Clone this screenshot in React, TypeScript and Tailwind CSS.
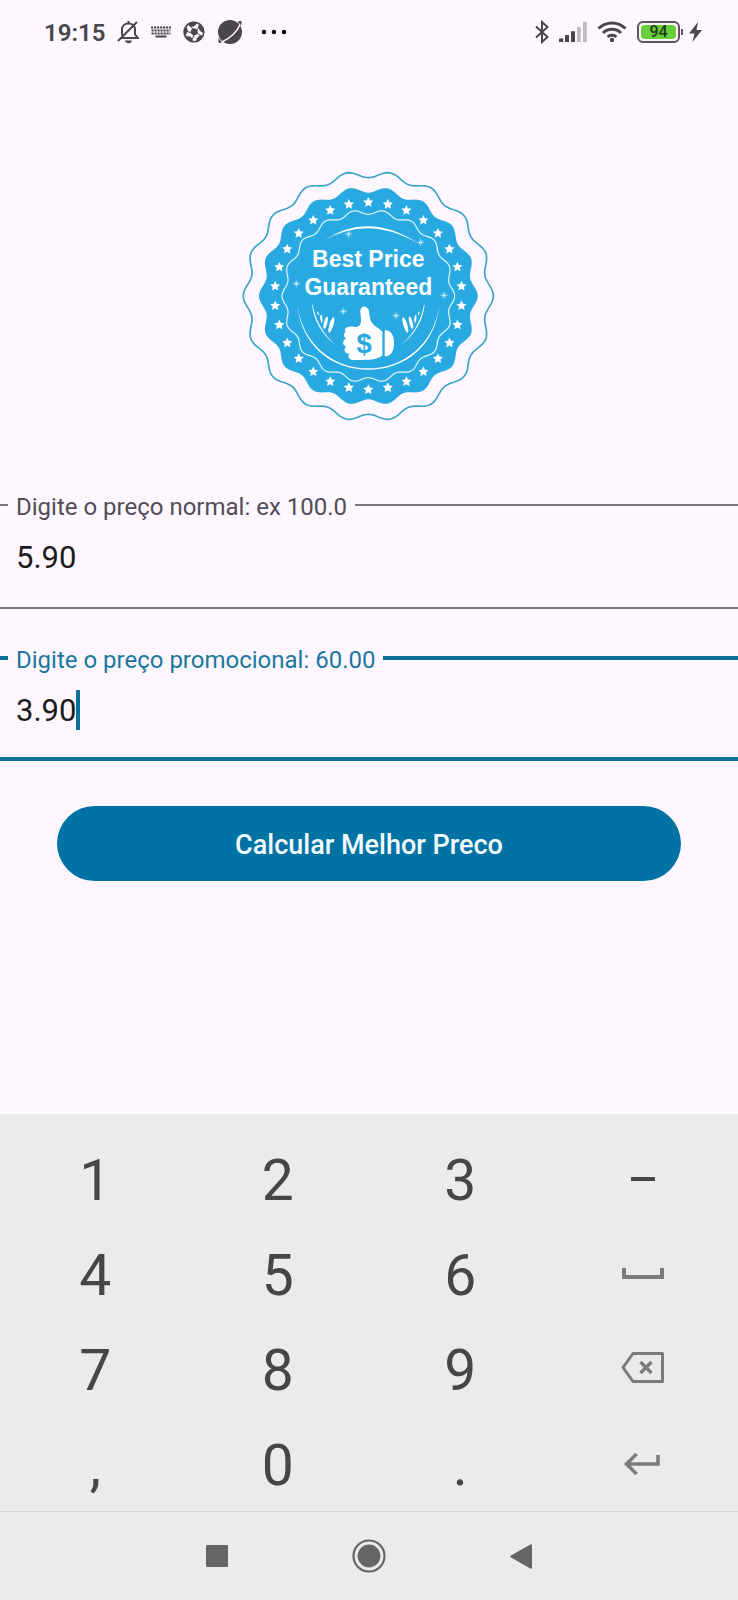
import React, { useState } from "react";

const CX = 400;
const CY = 392;

function polar(radius: number, degrees: number): [number, number] {
  const a = (degrees * Math.PI) / 180;
  return [CX + radius * Math.sin(a), CY - radius * Math.cos(a)];
}

function wavyRing(mean: number, amplitude: number, waves = 18): string {
  const points: string[] = [];
  for (let d = 0; d < 360; d += 1) {
    const r = mean - amplitude * Math.cos((waves * d * Math.PI) / 180);
    const [x, y] = polar(r, d);
    points.push(`${x.toFixed(1)} ${y.toFixed(1)}`);
  }
  return `M${points.join("L")}Z`;
}

function star(cx: number, cy: number, size: number): string {
  const points: string[] = [];
  for (let i = 0; i < 10; i += 1) {
    const r = i % 2 === 0 ? size : size * 0.48;
    const a = (i * Math.PI) / 5;
    points.push(`${(cx + r * Math.sin(a)).toFixed(1)} ${(cy - r * Math.cos(a)).toFixed(1)}`);
  }
  return `M${points.join("L")}Z`;
}

const STARS = Array.from({ length: 30 }, (_, i) => {
  const [x, y] = polar(281, i * 12);
  return star(x, y, 16);
}).join("");

const SPARKLES = [
  [341, 206],
  [557, 231],
  [184, 355],
  [627, 390],
  [325, 438],
  [483, 451],
];

const LEAVES = [
  [289, 479, 6, 24, 17],
  [272, 472, 5, 19, 14],
  [259, 460, 3, 12, -6],
  [249, 444, 2, 6, -20],
];

function Leaves() {
  return (
    <g fill="#fff">
      {LEAVES.map(([x, y, rx, ry, turn]) => (
        <ellipse key={x} cx={x} cy={y} rx={rx} ry={ry} transform={`rotate(${turn} ${x} ${y})`} />
      ))}
      <path d="M231 418Q240 492 303 540Q246 490 233 418Z" />
    </g>
  );
}

function Badge() {
  return (
    <svg viewBox="12 2 780 780" className="size-[260px]" role="img" aria-label="Best Price Guaranteed">
      <path d={wavyRing(365, 10)} fill="none" stroke="#3ba3cb" strokeWidth="5" />
      <path d={wavyRing(319, 9)} fill="#29a9e1" />
      <path d={STARS} fill="#fff" />
      <path d={wavyRing(252, 7)} fill="none" stroke="#e3f6fd" strokeWidth="3.5" />
      <path d="M270 224Q400 136 552 235Q400 148 270 224Z" fill="#fff" />
      <path d="M187 418C198 540 290 613 400 613C510 613 602 540 613 418C598 535 508 609 400 609C292 609 202 535 187 418Z" fill="#fff" />
      {SPARKLES.map(([x, y]) => (
        <g key={x} stroke="#c9eefb" strokeWidth="2" opacity="0.85">
          <path d={`M${x - 12} ${y}h24M${x} ${y - 12}v24M${x - 7} ${y - 7}l14 14M${x + 7} ${y - 7}l-14 14`} />
          <circle cx={x} cy={y} r="3.5" fill="#fff" />
        </g>
      ))}
      <g fill="#fff" fontFamily="'Liberation Sans', Arial, sans-serif" fontWeight="700" fontSize="69" textAnchor="middle">
        <text x="400" y="305">Best Price</text>
        <text x="400" y="390">Guaranteed</text>
      </g>
      <Leaves />
      <g transform="matrix(-1 0 0 1 800 0)">
        <Leaves />
      </g>
      <path
        d="M376 436C377 420 396 419 401 434C405 448 403 462 412 474C421 486 435 490 442 500V570C433 581 408 584 384 584H354C341 583 337 573 343 566C330 565 324 553 333 544C322 539 321 525 333 520C325 512 324 504 332 499C326 490 334 484 346 484C358 483 366 488 374 480C382 468 376 452 376 436Z"
        fill="#fff"
      />
      <path d="M449 495H456C470 499 477 512 477 534C477 556 470 568 456 573H449Z" fill="#fff" />
      <text x="387" y="562" fill="#29a9e1" fontFamily="'Liberation Sans', Arial, sans-serif" fontWeight="700" fontSize="82" textAnchor="middle">
        $
      </text>
    </svg>
  );
}

function StatusBar() {
  return (
    <header className="flex h-16 items-center justify-between pr-9 pl-11 text-[#49464c]">
      <div className="flex items-center gap-3">
        <time className="pt-0.5 text-[24px] font-semibold leading-7">19:15</time>
        <svg viewBox="0 0 22 24" className="h-6 w-[22px]" fill="none" stroke="currentColor" strokeWidth="2" aria-hidden="true">
          <path d="M4 18h17l-3-3.500V9.500c0-3.500-2.500-6-6.500-6S5 6 5 9.500v6" />
          <path d="M11.500 1v2M1 21L20 2" />
          <path d="M8 20.500h7c-.5 3.500-6.500 3.500-7 0Z" fill="currentColor" stroke="none" />
        </svg>
        <svg viewBox="0 0 20 12" className="h-3 w-5" fill="none" stroke="currentColor" aria-hidden="true">
          <path d="M0 1.500h20M.5 4.500h19M.5 7.500h19" strokeWidth="1.800" strokeDasharray="2.200 .8" />
          <path d="M4.500 10.500h11" strokeWidth="2" />
        </svg>
        <svg viewBox="0 0 22 22" className="size-[22px]" aria-hidden="true">
          <circle cx="11" cy="11" r="9.800" fill="#fef7ff" stroke="currentColor" strokeWidth="1.600" />
          <g fill="currentColor" stroke="currentColor" strokeWidth=".8">
            <path d="M9.500 7.500l4.500 1 .5 4-3.800 2-3.200-3Z" />
            <path d="M5.500 2.500l5-1.500 3 1.500-2.500 2.500-4 .5Z" />
            <path d="M16.500 3.500l3.500 4 .5 4-3-1.500-2-4Z" />
            <path d="M1.200 8l2.300-1.500 1 3.500-2 4-1.300-2Z" />
            <path d="M3.500 15.500l4 .5 2 3-.5 2-3.500-1.500Z" />
            <path d="M14 17.500l3-3 2.500.5-2.500 4-3 1.700Z" />
          </g>
          <path d="M9.500 7.500L7.500 5M14 8.500l2-2.500M14.500 12.500l3 2M10.700 14.500L9.500 18M7.500 11.500l-3.500-1" stroke="currentColor" fill="none" />
        </svg>
        <svg viewBox="0 0 26 26" className="size-[26px]" aria-hidden="true">
          <circle cx="13" cy="13" r="12" fill="currentColor" />
          <path d="M1.500 22C1 24 2.500 24.500 5 23.500L1.500 19ZM24.500 4C25 2 23.500 1.500 21 2.500L24 7Z" fill="currentColor" />
          <path d="M5 23C13 19.500 20.500 12.500 23 5.500" stroke="#fef7ff" strokeWidth="1.500" fill="none" />
        </svg>
        <svg viewBox="0 0 26 6" className="ml-1.5 h-1.5 w-[26px] text-black" fill="currentColor" aria-hidden="true">
          <circle cx="3" cy="3" r="2.200" />
          <circle cx="13" cy="3" r="2.200" />
          <circle cx="23" cy="3" r="2.200" />
        </svg>
      </div>
      <div className="flex items-center gap-2.5">
        <svg viewBox="0 0 14 24" className="h-6 w-3.5" fill="none" stroke="currentColor" strokeWidth="2" aria-hidden="true">
          <path d="M1 6.500L12.500 17L7 22V2l5.500 5L1 17.500" />
        </svg>
        <svg viewBox="0 0 28 20" className="h-5 w-7" fill="currentColor" aria-hidden="true">
          <path d="M0 16.500h4.300V20H0ZM6 13h4v7H6ZM12 9.500h4V20h-4Z" />
          <path d="M12 9.500h4V20h-4Z" />
          <path d="M18 5h3.800v15H18ZM24 0h3.800v20H24Z" opacity=".35" />
        </svg>
        <svg viewBox="0 0 30 22" className="h-[22px] w-[30px]" fill="none" stroke="currentColor" strokeWidth="3" aria-hidden="true">
          <path d="M1.500 7.500C9 0 21 0 28.500 7.500M6 12C11 7 19 7 24 12M10.500 16C13 13.500 17 13.500 19.500 16" />
          <circle cx="15" cy="19" r="2.200" fill="currentColor" stroke="none" />
        </svg>
        <div className="flex items-center gap-1.5">
          <div className="flex items-center gap-px">
            <div className="flex h-[22px] w-[43px] rounded-md border-2 border-[#5c5560] p-[2px]">
              <span className="flex flex-1 items-center justify-center rounded-sm bg-[#68cd3a] text-[16px] leading-3 font-medium text-[#1f3a16]">
                94
              </span>
            </div>
            <span className="h-1.5 w-0.5 bg-[#5c5560]" />
          </div>
          <svg viewBox="0 0 13 20" className="h-5 w-[13px]" fill="currentColor" aria-hidden="true">
            <path d="M9 0L0 11.500h5.500L3.500 20L13 8H7.500Z" />
          </svg>
        </div>
      </div>
    </header>
  );
}

function Field({
  id,
  label,
  value,
  active = false,
  onChange,
}: {
  id: string;
  label: string;
  value: string;
  active?: boolean;
  onChange: (value: string) => void;
}) {
  const rule = active ? "h-1 bg-[#0b7199]" : "h-0.5 bg-[#7b757f]";
  return (
    <div className={active ? "border-b-4 border-[#0b7199] pb-[9px]" : "border-b-2 border-[#7b757f] pb-3"}>
      <div className="flex h-7 items-center">
        <span className={`w-2 ${rule}`} />
        <label
          htmlFor={id}
          className={`px-2 pt-1 text-[24px] leading-7 ${active ? "text-[#1b779d]" : "text-[#524d56]"}`}
        >
          {label}
        </label>
        <span className={`flex-1 ${rule}`} />
      </div>
      <div className="flex h-[76px] items-center pl-4">
        <input
          id={id}
          type="text"
          inputMode="decimal"
          value={value}
          onChange={(e) => onChange(e.target.value)}
          className="field-sizing-content h-full bg-transparent text-[31px] text-[#1d1b20] outline-none"
        />
        {active && <span className="h-10 w-1 bg-[#0b7199]" />}
      </div>
    </div>
  );
}

const glyph = "text-[#7b7b7b]";

const KEYS: { name: string; face: React.ReactNode }[] = [
  { name: "1", face: "1" },
  { name: "2", face: "2" },
  { name: "3", face: "3" },
  { name: "menos", face: <span className="h-1 w-6 bg-[#464646]" /> },
  { name: "4", face: "4" },
  { name: "5", face: "5" },
  { name: "6", face: "6" },
  {
    name: "espaço",
    face: (
      <svg viewBox="0 0 42 12" className={`h-3 w-[42px] ${glyph}`} fill="none" stroke="currentColor" strokeWidth="4">
        <path d="M2 0v9h38V0" />
      </svg>
    ),
  },
  { name: "7", face: "7" },
  { name: "8", face: "8" },
  { name: "9", face: "9" },
  {
    name: "apagar",
    face: (
      <svg viewBox="0 0 44 34" className={`h-[34px] w-11 ${glyph}`} fill="none" stroke="currentColor" strokeWidth="3" strokeLinejoin="round">
        <path d="M12 1.500H41.500V29.500H12L2 15.500Z" />
        <path d="M19.500 10l11 11M30.500 10l-11 11" strokeWidth="3.500" />
      </svg>
    ),
  },
  { name: "vírgula", face: "," },
  { name: "0", face: "0" },
  { name: "ponto", face: "." },
  {
    name: "enter",
    face: (
      <svg viewBox="0 0 38 22" className={`h-[22px] w-[38px] ${glyph}`} fill="none" stroke="currentColor" strokeWidth="3.500">
        <path d="M12.500 1L2.500 11l10 10M2.500 11h31.500V2" />
      </svg>
    ),
  },
];

function Keyboard() {
  return (
    <section aria-label="Teclado" className="grid grid-cols-4 bg-[#ebebeb] px-1 pt-[17px]">
      {KEYS.map((key) => (
        <button
          key={key.name}
          type="button"
          aria-label={key.name}
          className="flex h-[95px] items-center justify-center text-[57px] leading-none text-[#464646]"
        >
          {typeof key.face === "string" ? <span className="pt-1">{key.face}</span> : key.face}
        </button>
      ))}
    </section>
  );
}

function NavigationBar() {
  return (
    <nav className="flex h-[89px] items-center justify-center gap-[124px] border-t border-[#d2d2d2] bg-[#ebebeb] text-[#656565]">
      <button type="button" aria-label="Recentes">
        <svg viewBox="0 0 22 22" className="size-[22px]" fill="currentColor">
          <rect width="22" height="22" rx="1" />
        </svg>
      </button>
      <button type="button" aria-label="Início">
        <svg viewBox="0 0 34 34" className="size-[34px]" fill="currentColor">
          <circle cx="17" cy="17" r="15.500" fill="none" stroke="currentColor" strokeWidth="2.200" />
          <circle cx="17" cy="17" r="11.400" />
        </svg>
      </button>
      <button type="button" aria-label="Voltar">
        <svg viewBox="0 0 22 25" className="h-[25px] w-[22px]" fill="currentColor">
          <path d="M20.800.3Q22 0 22 1.200V23.800Q22 25 20.800 24.700L.6 13.300Q-.2 12.500.6 11.700Z" />
        </svg>
      </button>
    </nav>
  );
}

export default function App() {
  const [normal, setNormal] = useState("5.90");
  const [promo, setPromo] = useState("3.90");
  return (
    <div className="flex min-h-screen flex-col bg-[#fef7ff] font-[Roboto,sans-serif]">
      <StatusBar />
      <main className="flex flex-1 flex-col">
        <div className="flex justify-center pt-[102px] pb-[65px]">
          <Badge />
        </div>
        <form className="flex flex-col" onSubmit={(e) => e.preventDefault()}>
          <div className="flex flex-col gap-[35px]">
            <Field id="normal" label="Digite o preço normal: ex 100.0" value={normal} onChange={setNormal} />
            <Field id="promo" label="Digite o preço promocional: 60.00" value={promo} active onChange={setPromo} />
          </div>
          <button
            type="submit"
            className="mx-[57px] mt-[45px] h-[75px] rounded-full bg-[#0072a4] pt-1 text-[27px] font-medium text-[#f4fbff]"
          >
            Calcular Melhor Preco
          </button>
        </form>
      </main>
      <Keyboard />
      <NavigationBar />
    </div>
  );
}
